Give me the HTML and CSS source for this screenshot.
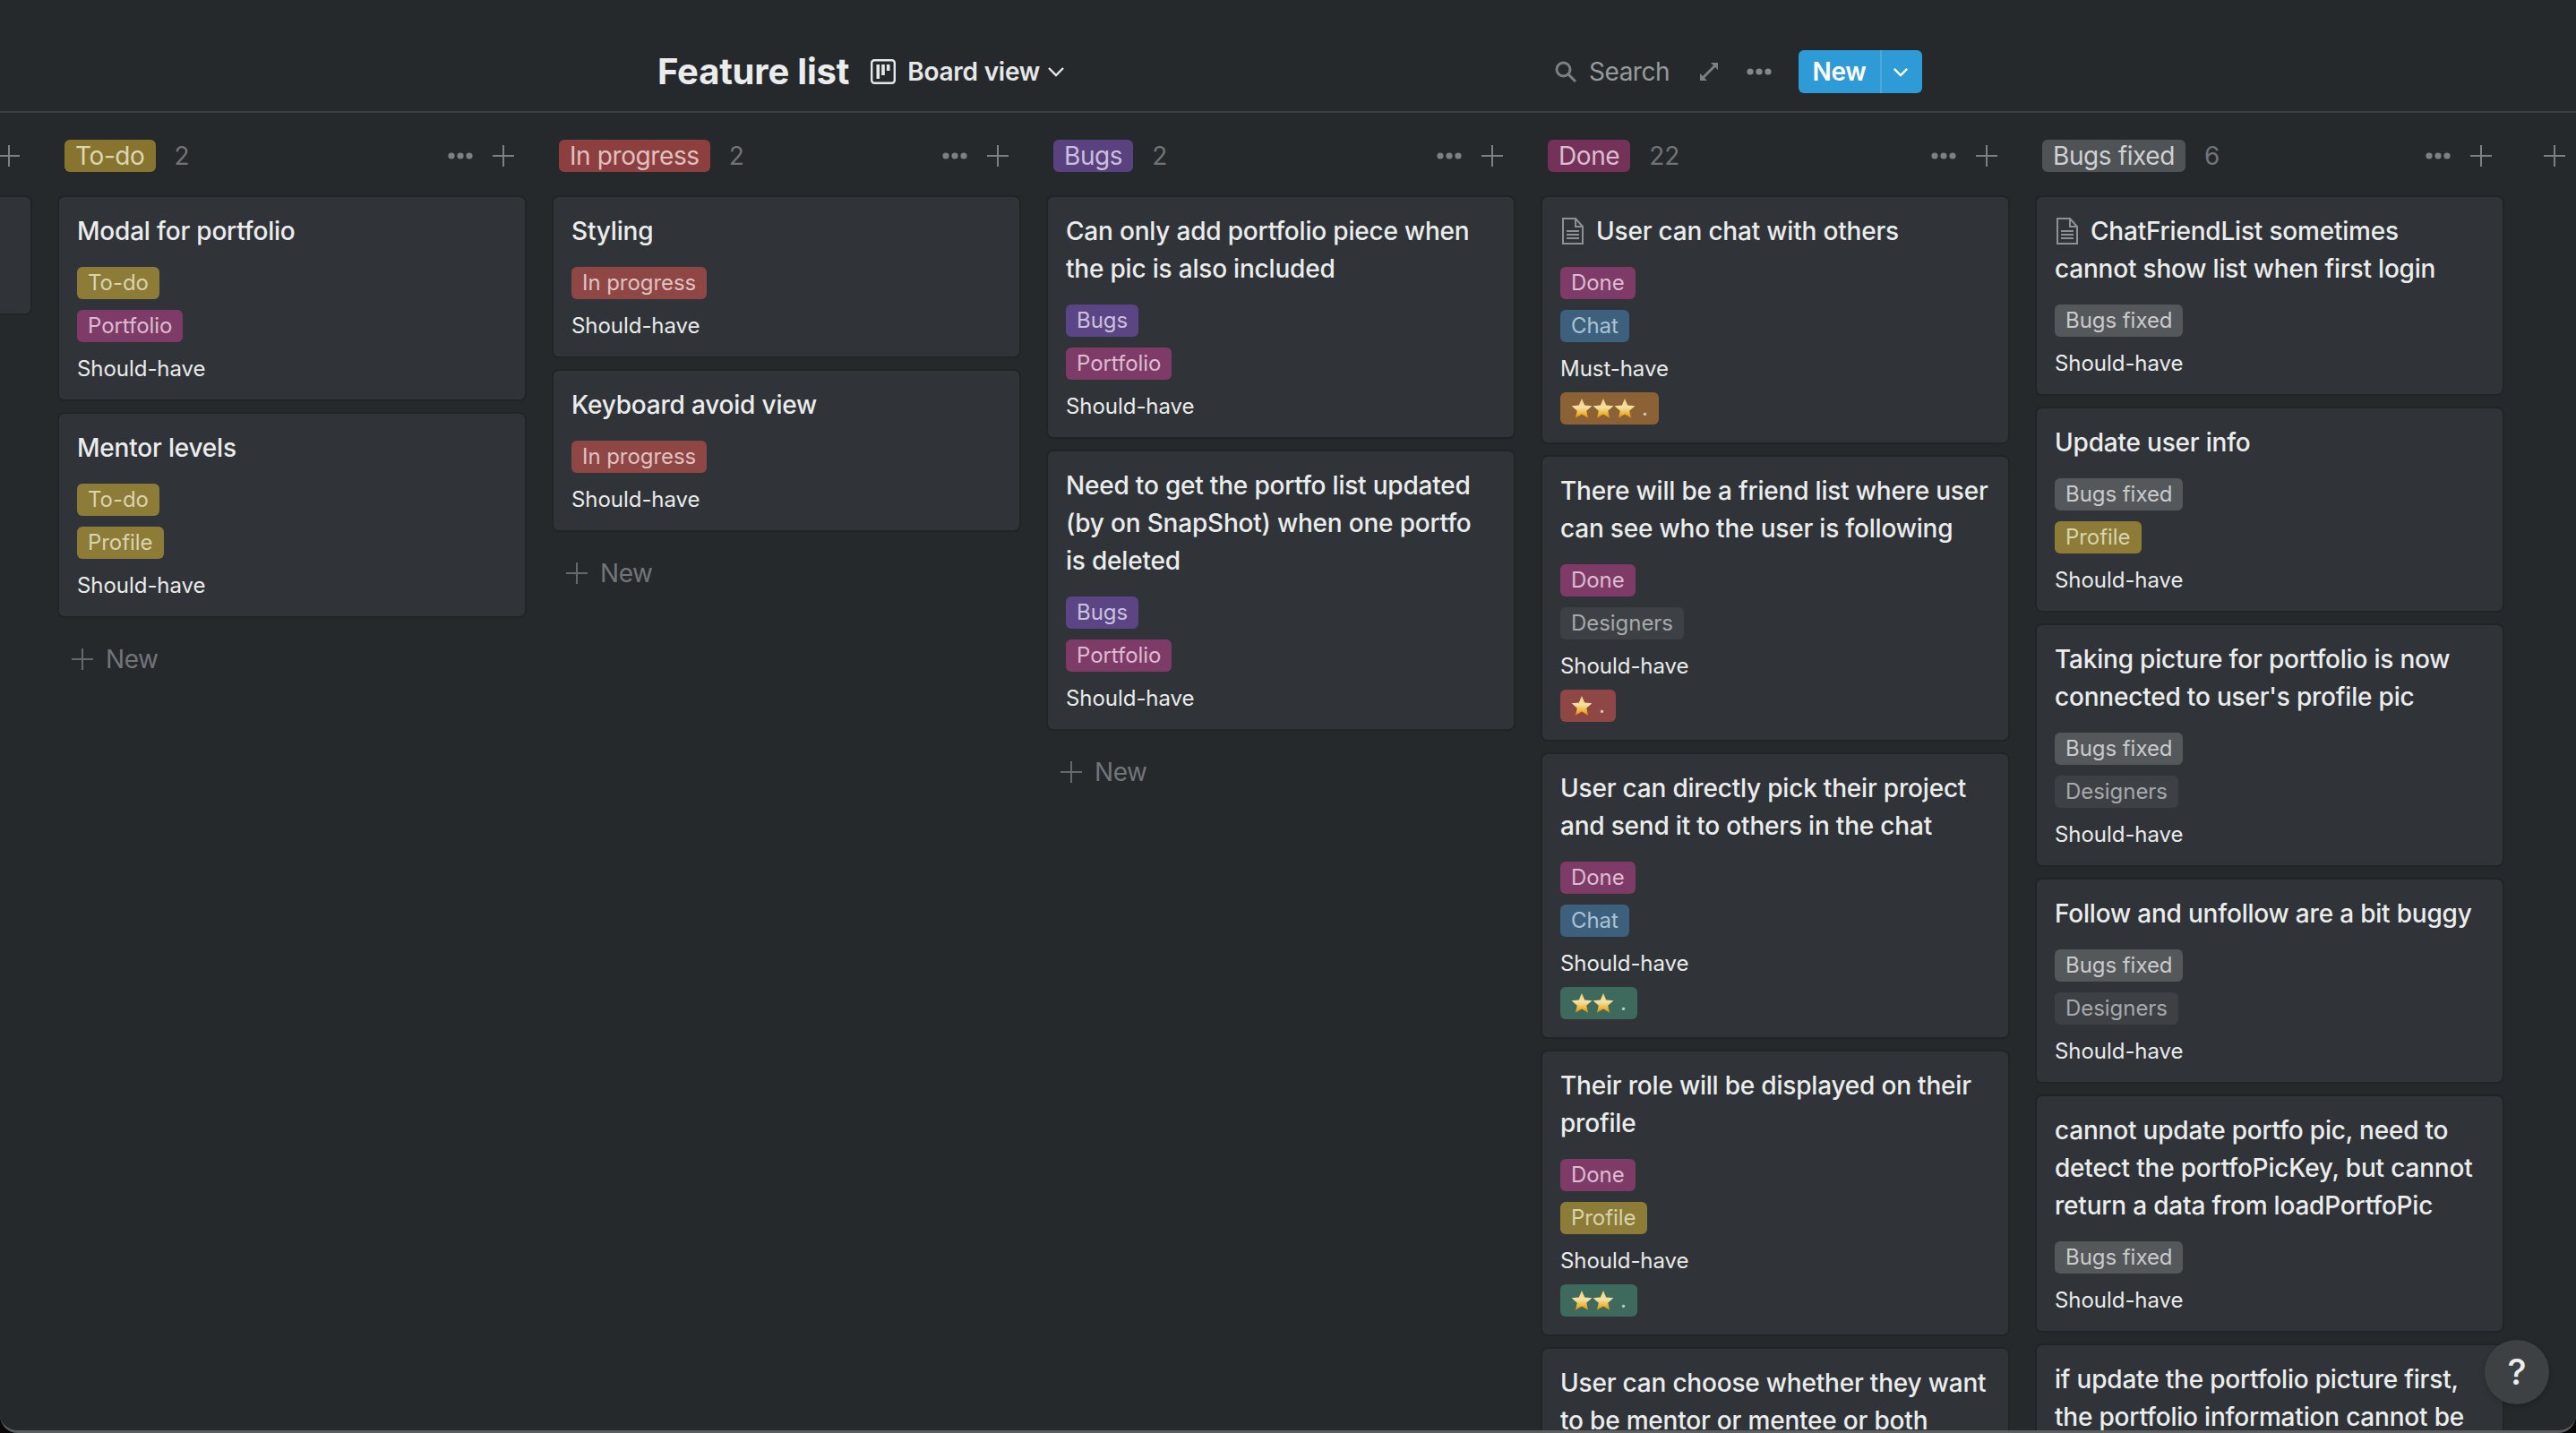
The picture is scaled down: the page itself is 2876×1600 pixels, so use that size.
FILE: index.html
```html
<!DOCTYPE html>
<html lang="en">
<head>
    <meta charset="utf-8" />
    <title>Feature list</title>
    <link rel="stylesheet" href="styles.css">
</head>
<body>
<svg class="defs" width="0" height="0">
    <defs>
        <linearGradient id="starFill" x1="0" y1="0" x2="0" y2="1">
            <stop offset="0" stop-color="#f5d26f" />
            <stop offset="0.45" stop-color="#f4e0a6" />
            <stop offset="0.75" stop-color="#efb93c" />
            <stop offset="1" stop-color="#e58600" />
        </linearGradient>
        <symbol id="star" viewBox="0 0 24 24">
            <path fill="url(#starFill)" d="M12 1l3.2 7.6 8.200.7-6.200 5.400 1.900 8-7.100-4.300-7.100 4.300 1.900-8L.6 9.300l8.200-.7z" />
        </symbol>
        <symbol id="plus" viewBox="0 0 24 24">
            <path d="M12 0v24M0 12h24" fill="none" stroke="currentColor" stroke-width="2" />
        </symbol>
        <symbol id="dots" viewBox="0 0 28 8">
            <circle cx="4" cy="4" r="3.6" fill="currentColor" />
            <circle cx="14" cy="4" r="3.6" fill="currentColor" />
            <circle cx="24" cy="4" r="3.6" fill="currentColor" />
        </symbol>
        <symbol id="page" viewBox="0 0 24 30">
            <path d="M1 1h14l8 9v19H1zM15 1v9h8M5 15h14M5 19h14M5 23h14" fill="none" stroke="currentColor" stroke-width="2" />
        </symbol>
    </defs>
</svg>

<div class="app">
    <header class="topbar">
        <div class="topbar-left">
            <h1 class="page-title">Feature list</h1>
            <div class="view-picker">
                <svg class="board-icon" viewBox="0 0 28 28">
                    <rect x="1.2" y="1.2" width="25.6" height="25.6" rx="3" fill="none" stroke="currentColor" stroke-width="2.4" />
                    <path d="M6.500 6h3.600v16H6.500zM12.200 6h3.600v12h-3.600zM17.900 6h3.600v7h-3.600z" fill="currentColor" />
                </svg>
                <span>Board view</span>
                <svg class="chevron" viewBox="0 0 20 12">
                    <path d="M2 2l8 8 8-8" fill="none" stroke="currentColor" stroke-width="2.400" />
                </svg>
            </div>
        </div>
        <div class="topbar-right">
            <div class="search">
                <svg class="search-icon" viewBox="0 0 24 24">
                    <circle cx="9.500" cy="9.500" r="7.500" fill="none" stroke="currentColor" stroke-width="3" />
                    <path d="M15 15l8 8" fill="none" stroke="currentColor" stroke-width="3" />
                </svg>
                <span>Search</span>
            </div>
            <svg class="expand-icon" viewBox="0 0 20 20">
                <path d="M12 0h8v8l-3-3L5 17l3 3H0v-8l3 3L15 3z" fill="currentColor" />
            </svg>
            <svg class="top-dots"><use href="#dots" /></svg>
            <div class="new-btn">
                <span class="new-label">New</span>
                <span class="new-arrow">
                    <svg class="chevron-white" viewBox="0 0 20 12">
                        <path d="M2 2l8 8 8-8" fill="none" stroke="currentColor" stroke-width="2.600" />
                    </svg>
                </span>
            </div>
        </div>
    </header>

    <main class="board">
        <section class="column">
            <div class="col-head">
                <span class="col-spacer"></span>
                <svg class="col-plus"><use href="#plus" /></svg>
            </div>
            <div class="card card-stub"></div>
        </section>

        <section class="column">
            <div class="col-head">
                <span class="head-tag h-yellow">To-do</span>
                <span class="count">2</span>
                <span class="col-spacer"></span>
                <svg class="col-dots"><use href="#dots" /></svg>
                <svg class="col-plus"><use href="#plus" /></svg>
            </div>
            <article class="card">
                <h2 class="card-title">Modal for portfolio</h2>
                <div class="prop"><span class="tag yellow">To-do</span></div>
                <div class="prop"><span class="tag pink">Portfolio</span></div>
                <div class="prop prop-text">Should-have</div>
            </article>
            <article class="card">
                <h2 class="card-title">Mentor levels</h2>
                <div class="prop"><span class="tag yellow">To-do</span></div>
                <div class="prop"><span class="tag yellow">Profile</span></div>
                <div class="prop prop-text">Should-have</div>
            </article>
            <div class="add-row"><svg class="add-plus"><use href="#plus" /></svg>New</div>
        </section>

        <section class="column">
            <div class="col-head">
                <span class="head-tag h-red">In progress</span>
                <span class="count">2</span>
                <span class="col-spacer"></span>
                <svg class="col-dots"><use href="#dots" /></svg>
                <svg class="col-plus"><use href="#plus" /></svg>
            </div>
            <article class="card">
                <h2 class="card-title">Styling</h2>
                <div class="prop"><span class="tag red">In progress</span></div>
                <div class="prop prop-text">Should-have</div>
            </article>
            <article class="card">
                <h2 class="card-title">Keyboard avoid view</h2>
                <div class="prop"><span class="tag red">In progress</span></div>
                <div class="prop prop-text">Should-have</div>
            </article>
            <div class="add-row"><svg class="add-plus"><use href="#plus" /></svg>New</div>
        </section>

        <section class="column">
            <div class="col-head">
                <span class="head-tag h-purple">Bugs</span>
                <span class="count">2</span>
                <span class="col-spacer"></span>
                <svg class="col-dots"><use href="#dots" /></svg>
                <svg class="col-plus"><use href="#plus" /></svg>
            </div>
            <article class="card">
                <h2 class="card-title">Can only add portfolio piece when the pic is also included</h2>
                <div class="prop"><span class="tag purple">Bugs</span></div>
                <div class="prop"><span class="tag pink">Portfolio</span></div>
                <div class="prop prop-text">Should-have</div>
            </article>
            <article class="card">
                <h2 class="card-title">Need to get the portfo list updated (by on SnapShot) when one portfo is deleted</h2>
                <div class="prop"><span class="tag purple">Bugs</span></div>
                <div class="prop"><span class="tag pink">Portfolio</span></div>
                <div class="prop prop-text">Should-have</div>
            </article>
            <div class="add-row"><svg class="add-plus"><use href="#plus" /></svg>New</div>
        </section>

        <section class="column">
            <div class="col-head">
                <span class="head-tag h-pink">Done</span>
                <span class="count">22</span>
                <span class="col-spacer"></span>
                <svg class="col-dots"><use href="#dots" /></svg>
                <svg class="col-plus"><use href="#plus" /></svg>
            </div>
            <article class="card">
                <h2 class="card-title"><svg class="doc-icon"><use href="#page" /></svg>User can chat with others</h2>
                <div class="prop"><span class="tag pink">Done</span></div>
                <div class="prop"><span class="tag blue">Chat</span></div>
                <div class="prop prop-text">Must-have</div>
                <div class="prop"><span class="tag orange"><svg class="star"><use href="#star" /></svg><svg class="star"><use href="#star" /></svg><svg class="star"><use href="#star" /></svg><span class="star-dot">.</span></span></div>
            </article>
            <article class="card">
                <h2 class="card-title">There will be a friend list where user can see who the user is following</h2>
                <div class="prop"><span class="tag pink">Done</span></div>
                <div class="prop"><span class="tag gray">Designers</span></div>
                <div class="prop prop-text">Should-have</div>
                <div class="prop"><span class="tag red"><svg class="star"><use href="#star" /></svg><span class="star-dot">.</span></span></div>
            </article>
            <article class="card">
                <h2 class="card-title">User can directly pick their project and send it to others in the chat</h2>
                <div class="prop"><span class="tag pink">Done</span></div>
                <div class="prop"><span class="tag blue">Chat</span></div>
                <div class="prop prop-text">Should-have</div>
                <div class="prop"><span class="tag green"><svg class="star"><use href="#star" /></svg><svg class="star"><use href="#star" /></svg><span class="star-dot">.</span></span></div>
            </article>
            <article class="card">
                <h2 class="card-title">Their role will be displayed on their profile</h2>
                <div class="prop"><span class="tag pink">Done</span></div>
                <div class="prop"><span class="tag yellow">Profile</span></div>
                <div class="prop prop-text">Should-have</div>
                <div class="prop"><span class="tag green"><svg class="star"><use href="#star" /></svg><svg class="star"><use href="#star" /></svg><span class="star-dot">.</span></span></div>
            </article>
            <article class="card">
                <h2 class="card-title">User can choose whether they want to be mentor or mentee or both</h2>
            </article>
        </section>

        <section class="column">
            <div class="col-head">
                <span class="head-tag h-gray">Bugs fixed</span>
                <span class="count">6</span>
                <span class="col-spacer"></span>
                <svg class="col-dots"><use href="#dots" /></svg>
                <svg class="col-plus"><use href="#plus" /></svg>
            </div>
            <article class="card">
                <h2 class="card-title"><svg class="doc-icon"><use href="#page" /></svg>ChatFriendList sometimes cannot show list when first login</h2>
                <div class="prop"><span class="tag light-gray">Bugs fixed</span></div>
                <div class="prop prop-text">Should-have</div>
            </article>
            <article class="card">
                <h2 class="card-title">Update user info</h2>
                <div class="prop"><span class="tag light-gray">Bugs fixed</span></div>
                <div class="prop"><span class="tag yellow">Profile</span></div>
                <div class="prop prop-text">Should-have</div>
            </article>
            <article class="card">
                <h2 class="card-title">Taking picture for portfolio is now connected to user's profile pic</h2>
                <div class="prop"><span class="tag light-gray">Bugs fixed</span></div>
                <div class="prop"><span class="tag gray">Designers</span></div>
                <div class="prop prop-text">Should-have</div>
            </article>
            <article class="card">
                <h2 class="card-title">Follow and unfollow are a bit buggy</h2>
                <div class="prop"><span class="tag light-gray">Bugs fixed</span></div>
                <div class="prop"><span class="tag gray">Designers</span></div>
                <div class="prop prop-text">Should-have</div>
            </article>
            <article class="card">
                <h2 class="card-title">cannot update portfo pic, need to detect the portfoPicKey, but cannot return a data from loadPortfoPic</h2>
                <div class="prop"><span class="tag light-gray">Bugs fixed</span></div>
                <div class="prop prop-text">Should-have</div>
            </article>
            <article class="card">
                <h2 class="card-title">if update the portfolio picture first, the portfolio information cannot be</h2>
            </article>
        </section>

        <section class="column column-add">
            <div class="col-head">
                <svg class="col-plus"><use href="#plus" /></svg>
            </div>
        </section>
    </main>

    <div class="help">?</div>
</div>
</body>
</html>
```

FILE: styles.css
```css
* {
    padding: 0;
    margin: 0;
    box-sizing: border-box;
}
html, body {
    height: 100%;
    overflow: hidden;
    background: #0b0709;
}
body {
    font-family: "Inter", "Liberation Sans", sans-serif;
    color: #e9eaea;
}
.defs {
    position: absolute;
}
.app {
    position: relative;
    height: 1600px;
    overflow: hidden;
    background: #25292c;
    border-bottom: 3px solid #5b5d5f;
    border-radius: 0 0 20px 20px;
}

/* top bar */
.topbar {
    display: flex;
    justify-content: space-between;
    align-items: center;
    height: 126px;
    padding: 36px 0 0 734px;
    border-bottom: 2px solid #3d4044;
}
.topbar-left, .view-picker, .topbar-right, .search, .new-btn {
    display: flex;
    align-items: center;
}
.page-title {
    font-size: 40px;
    line-height: 48px;
    font-weight: 700;
    letter-spacing: -0.2px;
    color: #ebecec;
}
.view-picker {
    margin-left: 24px;
    font-size: 28px;
    font-weight: 600;
    letter-spacing: -0.25px;
    color: #e6e7e7;
}
.board-icon {
    width: 28px;
    height: 28px;
    margin-right: 13px;
}
.chevron {
    width: 20px;
    height: 12px;
    margin-left: 8px;
}
.topbar-right {
    padding-right: 730px;
}
.search {
    font-size: 28px;
    letter-spacing: -0.5px;
    color: #97999b;
}
.search-icon {
    width: 24px;
    height: 24px;
    margin-right: 14px;
    color: #7d8082;
}
.expand-icon {
    width: 20px;
    height: 20px;
    margin-left: 34px;
    color: #7d8082;
}
.top-dots {
    width: 28px;
    height: 8px;
    margin-left: 32px;
    color: #85888a;
}
.new-btn {
    height: 48px;
    margin-left: 30px;
    border-radius: 6px;
    background: #2e9bd6;
    color: #fff;
    font-size: 28px;
    font-weight: 600;
    letter-spacing: -0.3px;
}
.new-label {
    width: 91px;
    text-align: center;
}
.new-arrow {
    display: flex;
    align-items: center;
    justify-content: center;
    width: 47px;
    height: 100%;
    padding-right: 3px;
    border-left: 2px solid #4fa9dc;
}
.chevron-white {
    width: 18px;
    height: 11px;
}

/* board */
.board {
    display: flex;
    gap: 32px;
    margin-left: -486px;
    padding-top: 30px;
}
.column {
    flex: none;
    display: flex;
    flex-direction: column;
    gap: 16px;
    width: 520px;
}
.col-head {
    display: flex;
    align-items: center;
    height: 36px;
    padding: 0 12px 0 6px;
    margin-bottom: 12px;
}
.col-spacer {
    flex: 1;
}
.head-tag {
    height: 36px;
    padding: 0 12px;
    border-radius: 6px;
    font-size: 28px;
    line-height: 36px;
    letter-spacing: -0.4px;
}
.count {
    margin-left: 21px;
    font-size: 28px;
    color: #717477;
}
.col-dots {
    width: 28px;
    height: 8px;
    margin-right: 22px;
    color: #7d8082;
}
.col-plus {
    width: 24px;
    height: 24px;
    color: #7d8082;
}
.h-yellow { background: #87752f; color: #dcd6b4; }
.h-red { background: #8d3f3f; color: #e0c0bf; }
.h-purple { background: #5a417f; color: #cabfdc; }
.h-pink { background: #743258; color: #dcbcd1; }
.h-gray { background: #505356; color: #cfd0d1; }

/* cards */
.card {
    flex: none;
    padding: 17px 20px 20px;
    border-radius: 6px;
    background: #303438;
    box-shadow: 0 0 0 2px #212427;
}
.card-stub {
    height: 130px;
}
.card-title {
    margin-bottom: 19px;
    font-size: 28px;
    line-height: 42px;
    font-weight: 500;
    letter-spacing: -0.2px;
    color: #ebecec;
}
.doc-icon {
    width: 24px;
    height: 30px;
    margin: 0 14px 0 2px;
    vertical-align: -5px;
    color: #8e9193;
}
.prop {
    height: 36px;
    margin-bottom: 12px;
    font-size: 24px;
    line-height: 36px;
    letter-spacing: -0.05px;
    color: #e9eaea;
}
.prop-text {
    height: 32px;
}
.prop:last-child {
    margin-bottom: 0;
}
.tag {
    display: inline-flex;
    align-items: center;
    height: 36px;
    padding: 0 12px;
    border-radius: 6px;
    vertical-align: top;
}
.yellow { background: #8c7c37; color: #d9d3ae; }
.pink { background: #7f3b67; color: #dcbcd2; }
.red { background: #8e4745; color: #e0c2c1; }
.purple { background: #5c4584; color: #cbc1de; }
.blue { background: #3d607d; color: #a9c2d4; }
.gray { background: #3d4145; color: #a6a9aa; }
.light-gray { background: #55585b; color: #c9cacb; }
.orange { background: #8b6136; color: #dcc9b1; }
.green { background: #3e6a5e; color: #b5cdc5; }
.star {
    width: 24px;
    height: 24px;
}
.star-dot {
    margin-left: 7px;
}

.add-row {
    display: flex;
    align-items: center;
    height: 48px;
    padding-left: 14px;
    margin-top: 8px;
    font-size: 28px;
    letter-spacing: -0.4px;
    color: #727578;
}
.add-plus {
    width: 24px;
    height: 24px;
    margin-right: 14px;
    color: #66696c;
}
.column-add {
    width: 40px;
}
.column-add .col-head {
    padding: 0 0 0 14px;
}

.help {
    position: absolute;
    right: 30px;
    bottom: 29px;
    width: 72px;
    height: 72px;
    border-radius: 50%;
    background: #3e4144;
    box-shadow: 0 2px 6px rgba(0, 0, 0, 0.2);
    font-size: 40px;
    font-weight: 500;
    line-height: 72px;
    text-align: center;
    color: #eceded;
}
```
